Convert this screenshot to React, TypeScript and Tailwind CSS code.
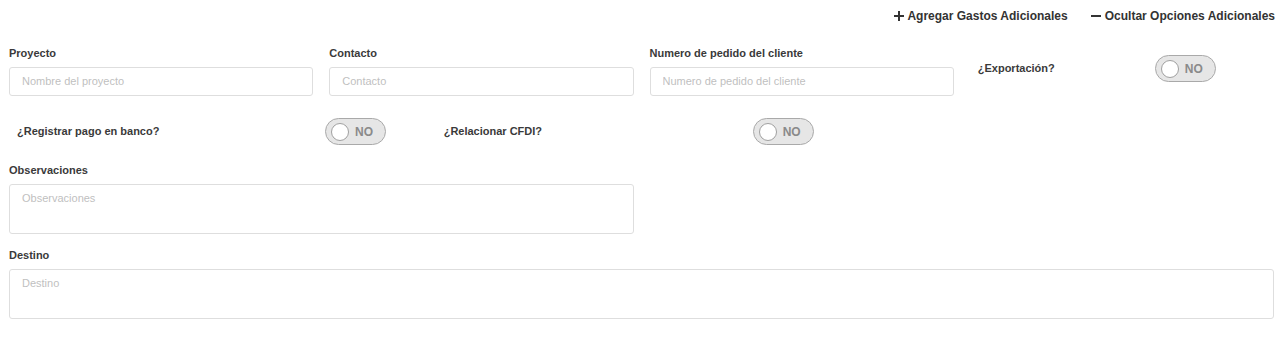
import { useState } from 'react'

function Toggle({ value, onChange }: { value: boolean; onChange: (v: boolean) => void }) {
  return (
    <button
      type="button"
      onClick={() => onChange(!value)}
      className="flex h-[27px] w-[61px] shrink-0 items-center gap-[6px] rounded-full border border-[#a9a9a9] bg-[#e6e6e6] pl-[5px]"
    >
      <span className="h-[18px] w-[18px] rounded-full border border-[#a0a0a0] bg-white" />
      <span className="text-[12px] font-bold text-[#8a8a8a]">{value ? 'SI' : 'NO'}</span>
    </button>
  )
}

function Field({ label, placeholder }: { label: string; placeholder: string }) {
  return (
    <div>
      <label className="block h-[22px] text-[11px] font-bold text-[#3a3a3a]">{label}</label>
      <input
        placeholder={placeholder}
        className="h-[29px] w-full rounded-[3px] border border-[#dedede] px-3 pb-[2px] text-[11px] placeholder-[#bfbfbf] focus:outline-none"
      />
    </div>
  )
}

function App() {
  const [exportacion, setExportacion] = useState(false)
  const [pagoBanco, setPagoBanco] = useState(false)
  const [cfdi, setCfdi] = useState(false)

  return (
    <div className="min-h-[344px] bg-white font-['Liberation_Sans',Arial,sans-serif]">
      {/* acciones */}
      <div className="flex h-[32px] items-center justify-end gap-[23px] pr-[8px] text-[12px] font-bold text-[#333]">
        <button type="button" className="flex items-center gap-[3px]">
          <svg width="10" height="10" viewBox="0 0 10 10" className="shrink-0">
            <path d="M5 0v10M0 5h10" stroke="#333" strokeWidth="2" />
          </svg>
          Agregar Gastos Adicionales
        </button>
        <button type="button" className="flex items-center gap-[4px]">
          <svg width="10" height="10" viewBox="0 0 10 10" className="shrink-0">
            <path d="M0 5h10" stroke="#333" strokeWidth="2" />
          </svg>
          Ocultar Opciones Adicionales
        </button>
      </div>

      {/* fila 1 */}
      <div className="mt-[13px] grid grid-cols-4 gap-4 px-[9px]">
        <Field label="Proyecto" placeholder="Nombre del proyecto" />
        <Field label="Contacto" placeholder="Contacto" />
        <Field label="Numero de pedido del cliente" placeholder="Numero de pedido del cliente" />
        <div className="flex items-center pt-[6px] pb-[10px]">
          <span className="w-[185px] pl-2 text-[11px] font-bold text-[#3a3a3a]">¿Exportación?</span>
          <Toggle value={exportacion} onChange={setExportacion} />
        </div>
      </div>

      {/* fila 2 */}
      <div className="mt-[22px] grid grid-cols-3">
        <div className="flex items-center">
          <span className="w-[325px] pl-[17px] text-[11px] font-bold text-[#3a3a3a]">¿Registrar pago en banco?</span>
          <Toggle value={pagoBanco} onChange={setPagoBanco} />
        </div>
        <div className="flex items-center">
          <span className="w-[325px] pl-[16px] text-[11px] font-bold text-[#3a3a3a]">¿Relacionar CFDI?</span>
          <Toggle value={cfdi} onChange={setCfdi} />
        </div>
        <div />
      </div>

      {/* observaciones */}
      <div className="mt-[17px] grid grid-cols-2 gap-4 px-[9px]">
        <div>
          <label className="block h-[22px] text-[11px] font-bold text-[#3a3a3a]">Observaciones</label>
          <textarea
            placeholder="Observaciones"
            className="block h-[50px] w-full resize-none rounded-[3px] border border-[#dedede] px-3 pt-[5px] text-[11px] placeholder-[#bfbfbf] focus:outline-none"
          />
        </div>
      </div>

      {/* destino */}
      <div className="mt-[13px] px-[9px]">
        <label className="block h-[22px] text-[11px] font-bold text-[#3a3a3a]">Destino</label>
        <textarea
          placeholder="Destino"
          className="block h-[50px] w-full resize-none rounded-[3px] border border-[#dedede] px-3 pt-[5px] text-[11px] placeholder-[#bfbfbf] focus:outline-none"
        />
      </div>
    </div>
  )
}

export default App
